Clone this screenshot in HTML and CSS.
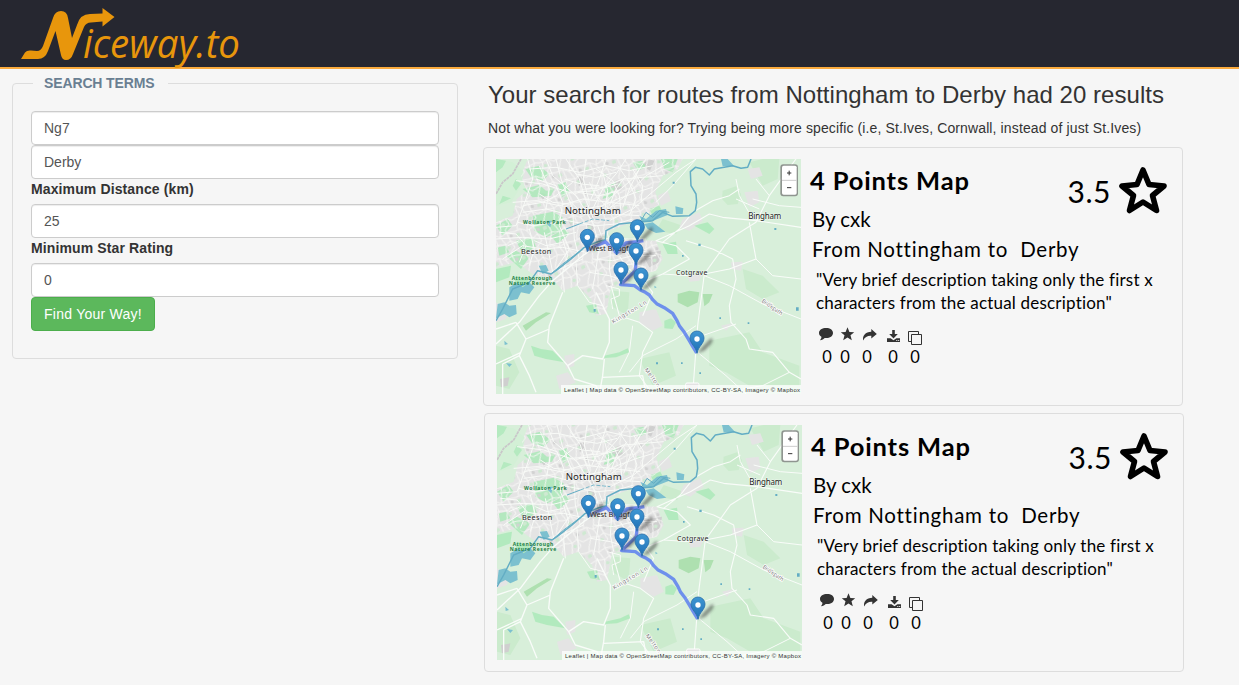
FILE: index.html
```html
<!DOCTYPE html>
<html lang="en">
<head>
<meta charset="utf-8">
<title>Niceway.to</title>
<link rel="stylesheet" href="styles.css">
</head>
<body>
<svg class="defs" width="0" height="0" aria-hidden="true">
  <defs>
    <linearGradient id="pinfill" x1="0" y1="0" x2="0" y2="1"><stop offset="0" stop-color="#3f97d3"/><stop offset="1" stop-color="#1f6fb5"/></linearGradient>
    <filter id="soft" x="-50%" y="-50%" width="200%" height="200%"><feGaussianBlur stdDeviation="5"/></filter>
    <pattern id="streets" width="83" height="71" patternUnits="userSpaceOnUse" patternTransform="rotate(-14)">
      <path d="M0 12L20 8L38 18L60 10L83 12M20 8L26 40L12 71M38 18L50 44L26 40L0 48M60 10L66 36L50 44L44 71M66 36L83 48M12 0V8M44 0L38 18M66 36L74 58L58 71M58 0L60 10" fill="none" stroke="#f7f7f5" stroke-width="1.600"/>
      <path d="M4 20l9 -2l2 8l-10 3zM54 50l8 3l-3 7l-8 -2z" fill="#cfe9d2"/>
      <path d="M68 18l8 3l-2 6l-7 -2z" fill="#d2d2d2"/>
    </pattern>
    <symbol id="pin" viewBox="-40 -75 110 80" overflow="visible">
      <path d="M0 0L18 -22L42 -46Q52 -42 42 -28L22 -8Z" fill="#333" opacity=".5" filter="url(#soft)"/>
      <path d="M0 0C-4 -22 -21 -28 -21 -46A21 21 0 0 1 21 -46C21 -28 4 -22 0 0Z" fill="url(#pinfill)" stroke="#2a70ab" stroke-width="2.5"/>
      <circle cx="0" cy="-43" r="8" fill="#fff"/>
    </symbol>
    <symbol id="map" viewBox="0 0 915 705">
      <rect width="915" height="705" fill="#d8efda"/>
      <g fill="#cbebcd">
        <path d="M680 95L720 82L735 105L725 135L695 138L678 120ZM350 395L400 400L395 470L345 440ZM640 545L760 520L800 580L910 620V680H760L690 640L640 620ZM760 10L800 0H850L845 60L800 80ZM0 560L40 570L70 640L40 690L0 680ZM740 330L800 350L850 400L800 420L750 390ZM500 180L560 200L540 225L480 215ZM430 600L520 580L540 650L470 680Z"/>
      </g>
      <g fill="#e4e4e4">
        <path id="urban" d="M95 0H560L545 30L500 50L478 100L490 135L455 165L420 185L340 215L325 240L480 245L500 300L480 335L440 345L400 330L395 375L345 385L330 465L300 470L285 420L245 380L200 395L170 360L110 345L60 310L0 325V190L50 170L62 120L92 95L75 50Z"/>
        <path d="M485 110L515 95L525 125L495 140ZM560 180L610 160L620 185L580 215L550 205ZM745 100L785 95L790 130L760 145ZM755 30L790 25L800 50L765 60ZM705 310L740 308L735 335L708 330ZM430 460L480 450L500 500L470 515L430 490ZM205 590L235 585L235 620L210 630ZM180 650L215 640L240 670L190 690ZM575 350L620 345L610 365L580 368ZM0 430L35 455L30 480L0 490ZM675 500L710 492L690 515ZM0 0H8V40H0Z"/>
      </g>
      <g fill="#cfcfcf"><path d="M245 55L262 50L265 75L248 80ZM455 0L475 5L462 35L440 20ZM130 100L150 105L140 125ZM440 285L495 275L490 310L460 325ZM270 195L300 205L285 225ZM12 660L40 655L35 680L15 685ZM350 70L370 60L378 88L355 95ZM210 175L235 180L225 200Z"/></g>
      <g fill="#ace9b9">
        <path d="M88 30L130 20L160 45L140 65L105 55ZM80 90L130 78L150 95L175 90L165 110L110 115ZM110 170L170 158L200 175L195 215L150 235L115 215ZM0 200L35 180L50 200L20 230ZM60 245L110 235L120 265L80 285ZM165 232L205 210L220 222L185 255ZM30 290L60 275L100 295L75 330ZM185 75L210 70L220 100L198 115ZM330 85L360 65L350 110L320 120ZM410 10L440 5L450 25L425 35ZM495 0L545 0L530 40L505 30ZM595 200L635 190L655 210L640 225ZM500 255L540 248L545 285L515 285ZM505 485L525 478L540 490L530 510L505 508ZM270 440L300 435L310 465L280 460ZM0 330L45 320L40 355L0 370ZM460 150L490 140L500 160L470 170ZM5 265L30 260L40 280L10 290ZM60 350L100 365L80 400L50 400ZM105 560L135 570L170 575L205 610L150 600L115 590ZM325 590L370 580L395 568L400 580L360 595L325 597Z" opacity=".85"/>
        <path d="M0 0L50 10L85 40L70 90L45 130L0 140Z" fill="#d3f0d6"/>
        <path d="M0 0L30 5L20 25L0 40ZM60 60L75 75L60 95L50 80ZM20 110L45 118L10 135Z" fill="#b5eac0"/>
      </g>
      <g fill="#aee0b0"><path d="M545 405L580 395L610 400L605 430L575 445L545 430ZM620 405L650 405L640 430L625 442ZM80 500L150 460L165 462L120 490L90 515Z"/></g>
      <use href="#urban" style="fill:url(#streets)"/>
      <path d="M95 0H560L545 30L500 50L478 100L490 135L455 165L420 185L340 215L325 240L480 245L500 300L480 335L440 345L400 330L395 375L345 385L330 465L300 470L285 420L245 380L200 395L170 360L110 345L60 310L0 325V190L50 170L62 120L92 95L75 50Z" fill="url(#streets)"/>
      <g fill="#7cc0cf">
        <path d="M40 385L65 370L80 385L100 370L115 385L100 405L75 400L65 420L40 425ZM5 435L25 430L40 440L60 438L62 465L40 475L25 465L0 478ZM430 170L450 180L480 155L510 150L515 168L490 178L460 190L440 190ZM445 195L470 190L490 205L508 218L480 222L455 210ZM538 142L562 148L560 165L540 165ZM675 0H695L715 22H680ZM152 185L168 185L163 205L152 195ZM128 320L150 318L158 335L140 345ZM30 612L48 615L40 624ZM25 545L36 555L26 558ZM475 380L482 385L476 388Z"/>
      </g>
      <g fill="none" stroke="#f9fbf8" stroke-width="3" stroke-linejoin="round">
        <path d="M95 0L110 60L90 120L60 200L0 205M150 0L170 50L240 110L290 190L310 260L300 330L290 390M210 0L250 60L268 120L295 185M270 0L262 60L280 130M330 0L310 60L285 120M390 0L360 45L320 90L290 150M450 0L410 60L350 110L300 160M520 10L450 50L390 110L310 170M600 0L540 40L480 90L410 150L340 185M60 65L140 75L220 100L300 95L380 60L440 55L500 50M50 130L120 125L190 140L260 120L340 130L430 140M80 160L150 150L210 165L280 155L350 165L430 170M100 30L180 25L250 40L330 20L400 35L470 20"/>
        <path d="M180 0L195 60L230 150L235 240L250 300M120 60L180 80L200 130L190 200L220 270L180 330M130 20L160 90L150 150M230 70L180 110L140 130L80 140M300 30L350 65L370 110L375 160M365 20L400 70L420 120L400 170M410 30L440 80L435 130M270 90L330 85L365 75M265 150L320 140L365 120L420 100L470 85M0 240L80 235L160 240L240 220M20 300L80 260L140 270L200 265L270 280M100 210L115 270L100 320M145 220L160 290L170 340L260 300M190 180L240 190L300 200L360 195L410 180M305 200L320 240L370 290L400 340M330 210L345 260L340 330L350 380M370 250L410 300L420 350M290 300L350 305L410 290L480 290M205 400L200 340L215 290L200 240M240 310L245 380L280 430L320 440M280 340L340 350L400 370M330 380L370 390L370 410L345 420L350 450"/>
        <path d="M205 60L255 75L310 80M220 20L240 45L300 55L360 40M280 70L300 110L340 150M245 100L310 110L370 95M215 120L260 165M320 40L335 95L325 165M390 50L360 90L340 140M430 30L400 90L380 145M130 105L170 130L220 135M65 190L110 200L180 190M10 220L60 225L90 260L70 310M35 260L70 245M115 245L150 260L200 250M280 230L340 240L450 240M340 275L400 270L460 280M350 320L410 315L450 325"/>
      </g>
      <g fill="none" stroke="#f9fcf9" stroke-width="4" stroke-linejoin="round">
        <path d="M0 555L70 490L130 410L170 365L260 290L320 250M200 400L160 500L155 550L215 620L260 590L320 600L340 550L340 480L300 400M60 490L90 540L70 590L100 650L120 700M70 590L20 615V705M90 540L160 510M0 510L60 490M0 615L75 580M325 600L320 650L310 705M215 620L235 660L300 680L310 705M320 655L440 650L450 705"/>
        <path d="M345 380L370 470L430 490L470 520L440 580L430 650L470 705M430 345L470 400L440 470M400 330L440 370L500 345L580 300L540 260L480 245L580 200L640 165L680 175L780 185L915 205M500 250L550 210L590 160L650 125L700 110L730 90M625 345L605 500L590 705M625 345L700 240L780 190L820 110L870 40L900 0M625 345L700 330L780 300L760 190M570 245L650 270L710 300L720 360L700 440L705 490L750 540L760 570L830 580L880 640L915 660" stroke-width="3.300"/>
        <path d="M625 350L700 380L800 435L915 480M600 500L540 540L440 590L400 640M605 580L690 650L750 705M605 535L720 495M770 180L730 110L720 60M770 120L850 140L915 145M820 110L780 60M720 120L790 150M780 300L830 350L915 360M880 640L800 680L740 690M600 0L530 80L480 130M500 345L575 350M410 500L400 580L370 640" stroke-width="3"/>
      </g>
      <path d="M75 0L50 45L20 70L0 105" fill="none" stroke="#c9c5c9" stroke-width="5" stroke-dasharray="9 2"/>
      <g fill="none" stroke="#63adc4" stroke-width="4.500" stroke-linejoin="round">
        <path d="M765 0L755 25L735 28L710 20L655 30L640 48L620 30L598 25L583 38L585 80L600 105L602 130L598 155L580 170L530 172L500 160L470 185L420 190L370 195L330 215L328 242L300 250L265 265L225 300L180 335L165 345L125 335L100 370L50 390L20 450L0 485"/>
        <path d="M165 345L200 315L250 278M435 185L450 160L470 175L490 155L520 160M210 210L250 195" stroke-width="3"/>
        <path d="M250 195L290 180L340 185" stroke-width="2.500" stroke-dasharray="12 5"/>
      </g>
      <g fill="#63adc4"><path d="M530 68h6v6h-6zM835 207h6v6h-6zM607 254h7v7h-7zM558 288h5v5h-5zM670 475h5v5h-5zM755 490h5v5h-5zM610 640h5v5h-5zM555 610h5v5h-5zM900 445h8v10h-8zM480 610h6v6h-6zM293 450h6v8h-6z"/></g>
      <path d="M274 272L328 248L362 282L390 252L424 248L442 245M420 310L418 335L374 377L415 380L433 393L448 400L460 408L470 422L482 434L505 446L530 463L543 485L550 500L565 520L580 545L590 562L602 582" fill="none" stroke="#4268f4" stroke-opacity=".7" stroke-width="10" stroke-linejoin="round"/>
      <g class="map-label">
        <text x="206" y="165" font-size="29" textLength="168">Nottingham</text>
        <text x="757" y="179" font-size="24" textLength="99">Bingham</text>
        <text x="75" y="285" font-size="22" textLength="91">Beeston</text>
        <text x="278" y="275" font-size="23" textLength="120">West Bridgf</text>
        <text x="540" y="347" font-size="21" textLength="94">Cotgrave</text>
      </g>
      <g class="map-park">
        <text x="81" y="195" textLength="128">Wollaton Park</text>
        <text x="47" y="363" textLength="122">Attenborough</text>
        <text x="38" y="379" textLength="140">Nature Reserve</text>
      </g>
      <g class="map-road">
        <text transform="translate(352 494) rotate(-31)" textLength="118">Kingston Ln</text>
        <text transform="translate(445 632) rotate(54)" textLength="66">Melton</text>
        <text transform="translate(796 428) rotate(35)" textLength="72">Bridlepath</text>
      </g>
      <rect x="569" y="672" width="40" height="22" rx="4" fill="#e3e3e3" stroke="#fff" stroke-width="3"/>
      <use href="#pin" x="234" y="203" width="110" height="80"/>
      <use href="#pin" x="384" y="174" width="110" height="80"/>
      <use href="#pin" x="322" y="213" width="110" height="80"/>
      <use href="#pin" x="380" y="244" width="110" height="80"/>
      <use href="#pin" x="335" y="301" width="110" height="80"/>
      <use href="#pin" x="395" y="319" width="110" height="80"/>
      <use href="#pin" x="563" y="508" width="110" height="80"/>
      <rect x="195" y="678" width="720" height="27" fill="#fff" opacity=".72"/>
      <text class="map-credit" x="204" y="698" textLength="708">Leaflet | Map data © OpenStreetMap contributors, CC-BY-SA, Imagery © Mapbox</text>
      <rect x="853" y="16" width="53" height="96" rx="9" fill="#777" opacity=".75"/>
      <rect x="858" y="20" width="44" height="87" rx="5" fill="#fff"/>
      <path d="M858 64H902" stroke="#ccc" stroke-width="3"/>
      <path d="M873 42H886M879.500 35V49M873 86H886" stroke="#333" stroke-width="3"/>
    </symbol>
    <symbol id="i-comment" viewBox="0 0 18 20" overflow="visible"><path d="M8.200 1C12 1 15 3 15 5.900S12 11 8.200 11C7.700 11 7.200 11 6.700 10.900C5.700 12 4 13 2 13.200C3 12.200 3.500 11 3.400 9.800C2 8.800 1 7.500 1 5.900C1 3 4.200 1 8.200 1Z" fill="#333"/></symbol>
    <symbol id="i-star" viewBox="0 0 18 20" overflow="visible"><path d="M11.500 .3L13.400 4.900L18.200 5.200L14.500 8.300L15.800 13.200L11.500 10.600L7.200 13.200L8.500 8.300L4.800 5.200L9.600 4.900Z" fill="#333"/></symbol>
    <symbol id="i-share" viewBox="0 0 18 20" overflow="visible"><path d="M13.300 2L18.800 6.900L13.300 11.500V8.800C9.500 8.600 6.800 10 5.300 13.500C4 8.700 7.500 4.800 13.300 4.700Z" fill="#333"/></symbol>
    <symbol id="i-download" viewBox="0 0 18 20" overflow="visible"><path d="M8.200 3H10.800V7H13.800L9.500 11.500L5.200 7H8.200ZM3 11.300H6.600L9.500 13.300L12.400 11.300H16V15H3ZM12.300 13V14H13.300V13ZM14.200 13V14H15.200V13Z" fill="#333" fill-rule="evenodd"/></symbol>
    <symbol id="i-copy" viewBox="0 0 18 20" overflow="visible"><path d="M5.500 14.500H2.500V4.500H12.500V7.500M5.500 7.500H15.500V17.500H5.500Z" fill="none" stroke="#333"/></symbol>
    <symbol id="i-rating" viewBox="0 0 50 50"><path d="M25 5L31 19.500L46 21L34.500 30.500L38.500 45.500L25 37L11.500 45.500L15.500 30.500L4 21L19 19.500Z" fill="none" stroke="#000" stroke-width="5.600" stroke-linejoin="round"/></symbol>
  </defs>
</svg>

<header class="topbar">
  <svg class="logo" width="260" height="67" viewBox="0 0 260 67" role="img" aria-label="Niceway.to">
    <g fill="#e8960c">
      <path d="M21 59L25 52.500Q27 50 31 50.500L37 51Q41 51 43 46L53 18Q55 11 61 11Q67 11 68 18L72 38L77 25Q80 14 90 14L102.500 13.500V8L114.500 17L102.500 26.500V21.500L91 22.500Q86 22.500 84 27L73 54Q71 60 66 60Q62 60 61 55L55.500 31L48 51Q45 59 38 59Z"/>
      <text class="logo-text" x="83" y="57.500" textLength="157" lengthAdjust="spacingAndGlyphs">iceway.to</text>
    </g>
  </svg>
</header>

<main class="page">
  <fieldset class="search">
    <legend>SEARCH TERMS</legend>
    <input class="field" type="text" value="Ng7" aria-label="From">
    <input class="field" type="text" value="Derby" aria-label="To">
    <label for="dist">Maximum Distance (km)</label>
    <input class="field" id="dist" type="text" value="25">
    <label for="stars">Minimum Star Rating</label>
    <input class="field" id="stars" type="text" value="0">
    <button class="submit" type="button">Find Your Way!</button>
  </fieldset>

  <section class="results">
    <h1>Your search for routes from Nottingham to Derby had 20 results</h1>
    <p class="hint">Not what you were looking for? Trying being more specific (i.e, St.Ives, Cornwall, instead of just St.Ives)</p>

    <article class="card">
      <svg class="map" width="305" height="235"><use href="#map" width="305" height="235"/></svg>
      <div class="info">
        <div class="head">
          <h2>4 Points Map</h2>
          <div class="rating"><span>3.5</span><svg width="50" height="50"><use href="#i-rating" width="50" height="50"/></svg></div>
        </div>
        <p class="by">By cxk</p>
        <p class="route">From Nottingham to&nbsp; Derby</p>
        <p class="desc">"Very brief description taking only the first x<br>characters from the actual description"</p>
        <div class="stats">
          <span><svg width="18" height="20"><use href="#i-comment" width="18" height="20"/></svg>0</span>
          <span><svg width="18" height="20"><use href="#i-star" width="18" height="20"/></svg>0</span>
          <span><svg width="18" height="20"><use href="#i-share" width="18" height="20"/></svg>0</span>
          <span><svg width="18" height="20"><use href="#i-download" width="18" height="20"/></svg>0</span>
          <span><svg width="18" height="20"><use href="#i-copy" width="18" height="20"/></svg>0</span>
        </div>
      </div>
    </article>

    <article class="card card-next">
      <svg class="map" width="305" height="235"><use href="#map" width="305" height="235"/></svg>
      <div class="info">
        <div class="head">
          <h2>4 Points Map</h2>
          <div class="rating"><span>3.5</span><svg width="50" height="50"><use href="#i-rating" width="50" height="50"/></svg></div>
        </div>
        <p class="by">By cxk</p>
        <p class="route">From Nottingham to&nbsp; Derby</p>
        <p class="desc">"Very brief description taking only the first x<br>characters from the actual description"</p>
        <div class="stats">
          <span><svg width="18" height="20"><use href="#i-comment" width="18" height="20"/></svg>0</span>
          <span><svg width="18" height="20"><use href="#i-star" width="18" height="20"/></svg>0</span>
          <span><svg width="18" height="20"><use href="#i-share" width="18" height="20"/></svg>0</span>
          <span><svg width="18" height="20"><use href="#i-download" width="18" height="20"/></svg>0</span>
          <span><svg width="18" height="20"><use href="#i-copy" width="18" height="20"/></svg>0</span>
        </div>
      </div>
    </article>
  </section>
</main>
</body>
</html>
```
FILE: styles.css
```css
* { box-sizing: border-box; }
body {
  margin: 0;
  height: 685px;
  overflow: hidden;
  background: #f6f6f6;
  color: #333;
  font: 14px/20px "Liberation Sans", Arial, sans-serif;
}
.defs { display: block; height: 0; }
h1, h2, p { margin: 0; font-weight: normal; }

.topbar { height: 69px; background: #262730; border-bottom: 2px solid #fbab3e; }
.logo { display: block; overflow: visible; }
.logo-text { font: italic 40px "Open Sans", "Noto Sans", sans-serif; }

.page { display: flex; align-items: flex-start; }

.search {
  width: 446px;
  height: 284px;
  margin: 6px 0 0 12px;
  padding: 20px 18px 18px;
  border: 1px solid #ddd;
  border-radius: 4px;
}
.search legend {
  width: 135px;
  margin: 0 0 0 2px;
  padding: 0 0 0 11px;
  line-height: 16px;
  font-weight: bold;
  letter-spacing: -.13px;
  color: #6a7f92;
  white-space: nowrap;
}
.search label {
  display: block;
  height: 25px;
  font-weight: bold;
  letter-spacing: .12px;
}
.field {
  display: block;
  width: 408px;
  height: 34px;
  padding: 6px 12px;
  border: 1px solid #ccc;
  border-radius: 4px;
  background: #fff;
  box-shadow: inset 0 1px 1px rgba(0, 0, 0, .075);
  color: #555;
  font: inherit;
}
.submit {
  display: block;
  width: 124px;
  height: 34px;
  padding: 0;
  border: 1px solid #4cae4c;
  border-radius: 4px;
  background: #5cb85c;
  color: #fff;
  font: inherit;
  letter-spacing: .25px;
}

.results { margin: 12px 0 0 25px; }
.results h1 { padding-left: 5px; font-size: 24px; line-height: 28px; letter-spacing: .03px; white-space: nowrap; }
.hint { padding-left: 5px; margin: 9px 0 9px; letter-spacing: .12px; white-space: nowrap; }

.card {
  display: flex;
  width: 700px;
  height: 259px;
  padding: 11px 12px 0;
  border: 1px solid #ddd;
  border-radius: 4px;
}
.card-next { margin: 7px 0 0 1px; }
.map { display: block; flex: none; }
.map-label { font-family: "Noto Sans", sans-serif; fill: #222; stroke: #fff; stroke-width: 3px; stroke-opacity: .6; paint-order: stroke; }
.map-park { font: bold 15px "Noto Sans", sans-serif; fill: #1f7d45; }
.map-road { font: 17px "Noto Sans", sans-serif; fill: #777; stroke: #fff; stroke-width: 4px; paint-order: stroke; }
.map-credit { font: 18px "Liberation Sans", sans-serif; fill: #333; }

.info {
  flex: 1;
  padding: 6px 0 0 9px;
  color: #000;
  font-family: Lato, sans-serif;
  font-variant-ligatures: none;
  white-space: nowrap;
}
.head { display: flex; justify-content: space-between; height: 41px; }
.head h2 { font-size: 25.500px; line-height: 30px; font-weight: bold; letter-spacing: .85px; }
.rating { display: flex; gap: 7px; margin-right: 2px; font-size: 30px; line-height: 52px; letter-spacing: .5px; }
.by, .route { padding-left: 2px; font-size: 20.500px; line-height: 26px; }
.route { margin-top: 4px; letter-spacing: .75px; }
.desc { margin: 6px 0 0 6px; font-size: 17px; line-height: 23px; letter-spacing: .2px; }
.stats {
  display: grid;
  grid-template-columns: 18px 18px 26px 26px 18px;
  margin: 13px 0 0 8px;
  font-size: 16.500px;
  line-height: 20px;
}
.stats span { display: flex; flex-direction: column; align-items: center; }
.stats svg { display: block; overflow: visible; }
```
